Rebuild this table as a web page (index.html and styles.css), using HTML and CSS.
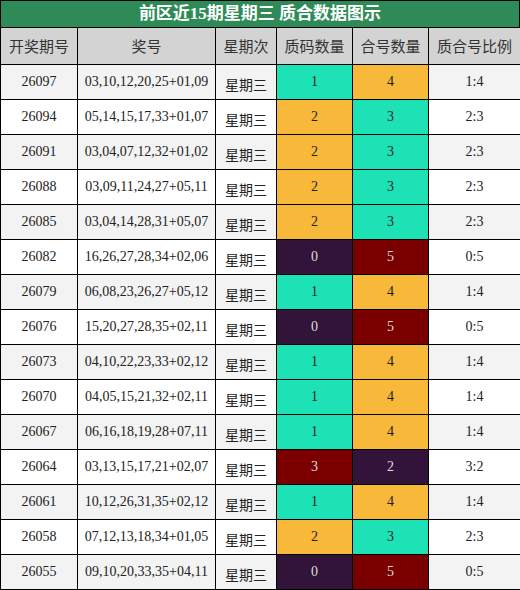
FILE: index.html
```html
<!DOCTYPE html>
<html lang="zh-CN">
<head>
    <meta charset="UTF-8">
    <title>前区近15期星期三 质合数据图示</title>
    <link rel="stylesheet" href="styles.css">
</head>
<body>
    <div class="chart">
        <div class="title">前区近15期星期三 质合数据图示</div>
        <table>
            <colgroup>
                <col class="c-issue">
                <col class="c-nums">
                <col class="c-week">
                <col class="c-prime">
                <col class="c-comp">
                <col class="c-ratio">
            </colgroup>
            <thead>
                <tr>
                    <th>开奖期号</th>
                    <th>奖号</th>
                    <th>星期次</th>
                    <th>质码数量</th>
                    <th>合号数量</th>
                    <th>质合号比例</th>
                </tr>
            </thead>
            <tbody id="rows"></tbody>
        </table>
    </div>

    <script>
        const data = [
            ['26097', '03,10,12,20,25+01,09', 1, 4],
            ['26094', '05,14,15,17,33+01,07', 2, 3],
            ['26091', '03,04,07,12,32+01,02', 2, 3],
            ['26088', '03,09,11,24,27+05,11', 2, 3],
            ['26085', '03,04,14,28,31+05,07', 2, 3],
            ['26082', '16,26,27,28,34+02,06', 0, 5],
            ['26079', '06,08,23,26,27+05,12', 1, 4],
            ['26076', '15,20,27,28,35+02,11', 0, 5],
            ['26073', '04,10,22,23,33+02,12', 1, 4],
            ['26070', '04,05,15,21,32+02,11', 1, 4],
            ['26067', '06,16,18,19,28+07,11', 1, 4],
            ['26064', '03,13,15,17,21+02,07', 3, 2],
            ['26061', '10,12,26,31,35+02,12', 1, 4],
            ['26058', '07,12,13,18,34+01,05', 2, 3],
            ['26055', '09,10,20,33,35+04,11', 0, 5]
        ];

        // 每个数量对应的格子颜色
        const tone = { 0: 'v0', 1: 'v1', 2: 'v2', 3: 'v3' };
        const toneComp = { 2: 'v0', 3: 'v1', 4: 'v2', 5: 'v3' };

        const body = document.getElementById('rows');
        data.forEach(([issue, nums, p, c]) => {
            body.innerHTML += `
                <tr>
                    <td>${issue}</td>
                    <td>${nums}</td>
                    <td class="cjk">星期三</td>
                    <td class="${tone[p]}">${p}</td>
                    <td class="${toneComp[c]}">${c}</td>
                    <td>${p}:${c}</td>
                </tr>`;
        });
    </script>
</body>
</html>
```

FILE: styles.css
```css
body {
    margin: 0;
    font-family: "Liberation Serif", "Noto Sans CJK SC", serif;
    color: #222;
}
.chart {
    width: 520px;
}
.title {
    height: 27px;
    line-height: 26px;
    background-color: #2e8b57;
    color: #fff;
    font-weight: bold;
    font-size: 17px;
    text-align: center;
    border: 1px solid #000;
    border-bottom: none;
    box-sizing: border-box;
}
table {
    width: 520px;
    border-collapse: collapse;
    table-layout: fixed;
}
.c-issue { width: 77px; }
.c-nums { width: 138px; }
.c-week { width: 61px; }
.c-prime { width: 76px; }
.c-comp { width: 76px; }
.c-ratio { width: 92px; }
th, td {
    border: 1px solid #000;
    text-align: center;
    padding: 0;
    line-height: 18px;
}
thead tr {
    height: 37px;
}
tbody tr {
    height: 35px;
}
th {
    background-color: #d3d3d3;
    font-family: "Noto Sans CJK SC", sans-serif;
    font-weight: normal;
    font-size: 15px;
    color: #333;
}
td {
    font-size: 14px;
}
tbody tr:nth-child(odd) {
    background-color: #f3f3f3;
}
tbody tr:nth-child(even) {
    background-color: #fff;
}
td.cjk {
    font-family: "Noto Sans CJK SC", sans-serif;
    font-size: 14px;
    padding-top: 3px;
}
td.v0 {
    background-color: #32143a;
    color: #ddd;
}
td.v1 {
    background-color: #1de2b5;
}
td.v2 {
    background-color: #f8b93a;
}
td.v3 {
    background-color: #7a0000;
    color: #ddd;
}
```
